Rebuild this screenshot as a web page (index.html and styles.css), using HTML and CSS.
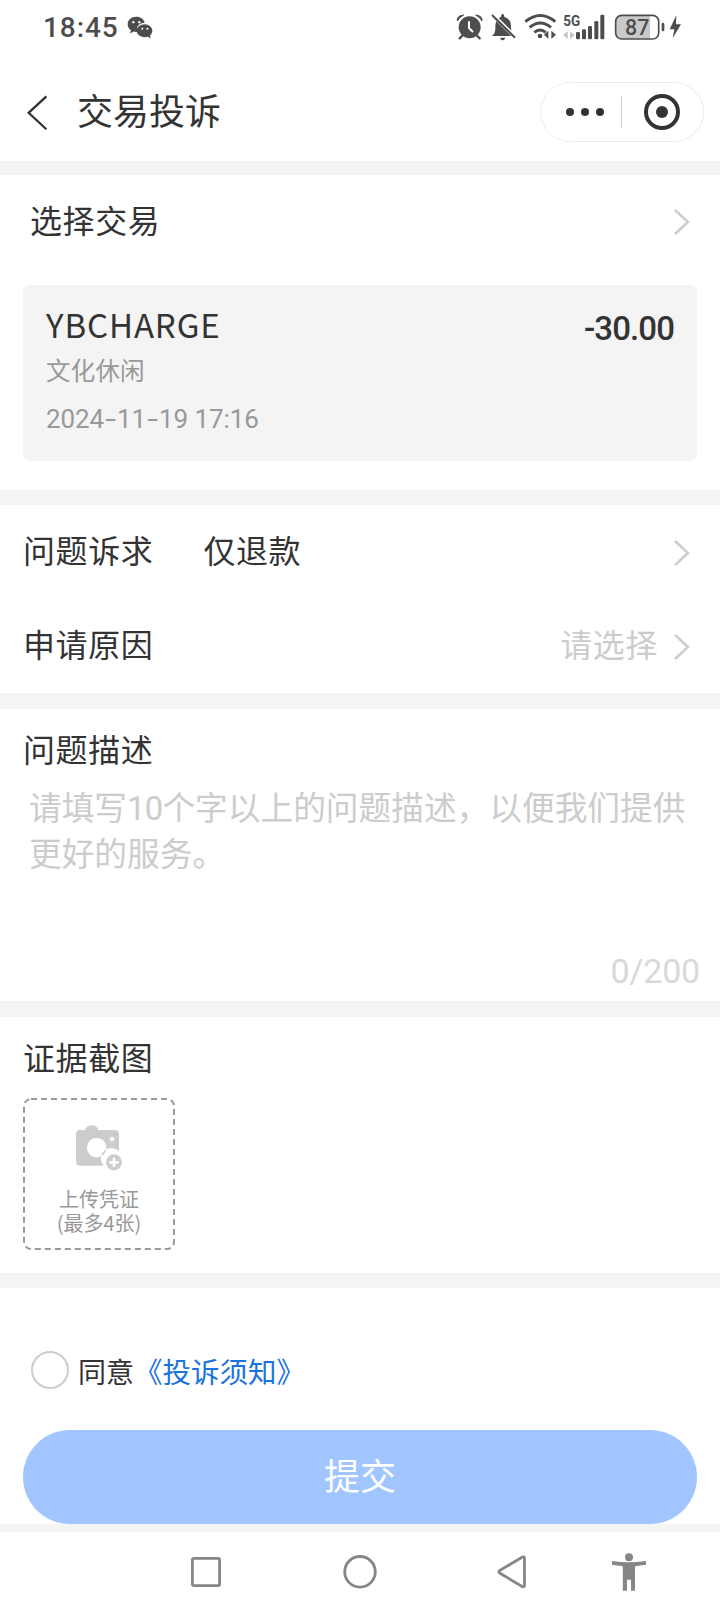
FILE: index.html
```html
<!DOCTYPE html>
<html lang="zh-CN">
<head>
<meta charset="utf-8">
<title>交易投诉</title>
<link rel="stylesheet" href="styles.css">
</head>
<body>
<div class="statusbar">
  <span class="clock">18:45</span>
  <svg class="wechat" viewBox="378 40 84 80" width="28" height="27">
    <path fill="#4d4d4d" d="M409 48c-15 0-26 10-26 22 0 8 4 14 10 18l-3 10 11-6q6 2 11 1c-5-16 7-27 22-27-2-11-13-18-25-18z"/>
    <path fill="#4d4d4d" d="M434 70c-14 0-24 9-24 20s10 19 24 19q5 0 9-1l9 5-2-9c5-4 7-9 7-14 0-11-10-20-23-20z"/>
    <g fill="#fff"><circle cx="400" cy="64" r="3.5"/><circle cx="418" cy="64" r="3.5"/><circle cx="427" cy="84" r="3"/><circle cx="442" cy="84" r="3"/></g>
  </svg>
  <svg class="indicators" viewBox="0 0 840 168" width="280" height="56">
    <g fill="#4d4d4d" stroke="none">
      <circle cx="89" cy="82" r="33"/>
      <path d="M52 63q-2-16 19-18-12 6-19 18zM126 63q2-16-19-18 12 6 19 18z" stroke="#4d4d4d" stroke-width="3" stroke-linejoin="round"/>
      <path d="M67 107l-8 8M111 107l8 8" stroke="#4d4d4d" stroke-width="7" stroke-linecap="round"/>
      <path d="M87 64v20l12 12" fill="none" stroke="#fff" stroke-width="6"/>
      <path d="M156 108c9-8 10-14 10-28 0-15 6-25 17-29q0-9 5-9t5 9c14 4 20 14 20 29 0 14 4 20 6 28zM180 113h16q-3 8-8 8t-8-8z"/>
      <path d="M157 43l68 68" stroke="#fff" stroke-width="12"/>
      <path d="M156 45l69 68" stroke="#4d4d4d" stroke-width="6"/>
    </g>
    <g fill="none" stroke="#4d4d4d" stroke-width="9">
      <path d="M256 65q45-37 90 0M269 82q32-26 64 0M283 97q17-14 34 0"/>
    </g>
    <g fill="#4d4d4d"><circle cx="300" cy="108" r="7"/><path d="M325 92v25l-13-13zM334 92v25l14-13z"/></g>
    <path fill="#c4c4c4" d="M383 94v24l-14-13zM390 94v24l14-13z"/>
    <text class="net" x="370" y="79" textLength="51" lengthAdjust="spacingAndGlyphs">5G</text>
    <g fill="#4d4d4d"><rect x="408" y="96" width="12" height="22" rx="4"/><rect x="426" y="88" width="12" height="30" rx="4"/><rect x="444" y="78" width="12" height="40" rx="4"/><rect x="463" y="63" width="12" height="55" rx="4"/><rect x="481" y="44" width="12" height="74" rx="4"/></g>
    <rect x="527" y="46" width="129" height="71" rx="18" fill="#fff"/>
    <path fill="#c9c9c9" d="M545 46h85v71h-85q-18 0-18-18V64q0-18 18-18z"/>
    <rect x="527" y="46" width="129" height="71" rx="18" fill="none" stroke="#4d4d4d" stroke-width="5"/>
    <rect x="665" y="68" width="8" height="26" rx="4" fill="#4d4d4d"/>
    <text class="charge" x="555" y="104" textLength="73" lengthAdjust="spacingAndGlyphs">87</text>
    <path fill="#4d4d4d" d="M709 46l-20 42h14l-5 27 25-42h-15z"/>
  </svg>
</div>

<header class="header">
  <svg class="back" viewBox="78 280 70 112" width="23" height="37"><path d="M140 287L86 337l54 50" fill="none" stroke="#333" stroke-width="7"/></svg>
  <h1 class="title">交易投诉</h1>
  <div class="capsule">
    <svg viewBox="0 0 162 58" width="162" height="58">
      <g fill="#333"><circle cx="29" cy="29" r="4"/><circle cx="44" cy="29" r="4"/><circle cx="59" cy="29" r="4"/><circle cx="121" cy="29" r="6"/></g>
      <path d="M80.5 13.500v32" stroke="#ccc"/>
      <circle cx="121" cy="29" r="16" fill="none" stroke="#333" stroke-width="4"/>
    </svg>
  </div>
</header>

<main class="page">
  <section class="section trade">
    <div class="row trade-head">
      <span class="label">选择交易</span>
      <svg class="arrow" viewBox="0 0 16 28" width="16" height="28"><path d="M1 2l13 12L1 26" fill="none" stroke="#ccc" stroke-width="2.500"/></svg>
    </div>
    <div class="card">
      <div class="card-info">
        <div class="merchant">YBCHARGE</div>
        <div class="category">文化休闲</div>
        <div class="time">2024<i class="dash">-</i>11<i class="dash">-</i>19 17:16</div>
      </div>
      <div class="amount">-30.00</div>
    </div>
  </section>

  <section class="section appeal">
    <div class="row appeal-row">
      <span class="label">问题诉求</span>
      <span class="value">仅退款</span>
      <svg class="arrow" viewBox="0 0 16 28" width="16" height="28"><path d="M1 2l13 12L1 26" fill="none" stroke="#ccc" stroke-width="2.500"/></svg>
    </div>
    <div class="row reason-row">
      <span class="label">申请原因</span>
      <span class="placeholder">请选择</span>
      <svg class="arrow" viewBox="0 0 16 28" width="16" height="28"><path d="M1 2l13 12L1 26" fill="none" stroke="#ccc" stroke-width="2.500"/></svg>
    </div>
  </section>

  <section class="section describe">
    <div class="label">问题描述</div>
    <p class="hint">请填写<span class="ten">10</span>个字以上的问题描述，以便我们提供<br>更好的服务。</p>
    <div class="counter">0/200</div>
  </section>

  <section class="section evidence">
    <div class="label">证据截图</div>
    <div class="upload">
      <svg class="dashes" viewBox="0 0 152 152" width="152" height="152"><rect x="1" y="1" width="150" height="150" rx="7" fill="none" stroke="#999" stroke-width="2" stroke-dasharray="6 4"/></svg>
      <svg class="camera" viewBox="225 372 144 144" width="48" height="48">
        <path fill="#ccc" fill-rule="evenodd" d="M240 390h15q4-14 20-14t20 14h49q13 0 13 13v51a31 31 0 0 0-46 43h-71q-12 0-12-13v-81q0-13 12-13zM290 414a29 29 0 1 0 .1 0zM336 410a7 7 0 1 0 .1 0z"/>
        <circle cx="342" cy="487" r="24" fill="#ccc"/><path d="M342 473v28M328 487h28" stroke="#fff" stroke-width="8"/>
      </svg>
      <div class="upload-text">上传凭证<br>(最多4张)</div>
    </div>
  </section>

  <section class="section confirm">
    <div class="agree">
      <span class="radio"></span>
      <span class="agree-text">同意</span>
      <a class="link">《投诉须知》</a>
    </div>
    <div class="submit">提交</div>
  </section>
</main>

<nav class="navbar">
  <svg class="nav-square" viewBox="0 0 32 80" width="32" height="80"><rect x="2.400" y="26.400" width="27.200" height="27.200" rx="1.500" fill="none" stroke="#868686" stroke-width="2.800"/></svg>
  <svg class="nav-circle" viewBox="0 0 36 80" width="36" height="80"><circle cx="18" cy="39.800" r="15.300" fill="none" stroke="#868686" stroke-width="2.800"/></svg>
  <svg class="nav-back" viewBox="0 0 32 80" width="32" height="80"><path d="M26.500 25L3.600 38.600q-1.400 1.200 0 2.400L26.500 54.700q2 .7 2-1.400V26.400q0-2.100-2-1.400z" fill="none" stroke="#868686" stroke-width="2.800"/></svg>
  <svg class="nav-person" viewBox="0 0 36 80" width="36" height="80"><g fill="#868686"><circle cx="18" cy="25.300" r="4"/><path d="M1 29q17 2.600 34 0v3.800l-11 1.500v24.400h-4v-11h-4v11h-4.200V34.300L1 32.800z"/></g></svg>
</nav>
</body>
</html>
```

FILE: styles.css
```css
* { box-sizing: border-box; }

body {
  margin: 0;
  width: 720px;
  height: 1612px;
  overflow: hidden;
  background: #fff;
  color: #333;
  font-family: "Noto Sans CJK SC", sans-serif;
}

svg { display: block; flex: none; }

.statusbar { display: flex; align-items: flex-start; height: 56px; }
.clock {
  width: 82px;
  margin-left: 43px;
  font: 500 28px/55px Roboto, sans-serif;
  letter-spacing: 0.9px;
  color: #4d4d4d;
}
.wechat { margin: 14px 0 0 1px; }
.indicators { margin-left: auto; }
.net { font: 700 46px Roboto, sans-serif; fill: #4d4d4d; }
.charge { font: 500 66px Roboto, sans-serif; fill: #4d4d4d; }

.header { display: flex; align-items: center; height: 105px; padding: 0 16px 0 26px; }
.back { margin-top: 7px; }
.title { margin: 0 0 0 28px; font-size: 36px; font-weight: 400; line-height: 102px; }
.capsule {
  width: 164px;
  height: 60px;
  margin-left: auto;
  margin-top: 7px;
  border: 1px solid #ebebeb;
  border-radius: 30px;
}

.page { display: flex; flex-direction: column; height: 1371px; background: #f4f4f4; padding-top: 14px; }
.section { background: #fff; padding: 0 23px; }
.label, .value, .placeholder { font-size: 32px; line-height: 48px; letter-spacing: 0.6px; }
.row { display: flex; align-items: center; }
.arrow { margin-left: auto; }

.trade { height: 315px; margin-bottom: 15px; }
.trade-head { height: 110px; padding: 0 7px; }
.trade-head .label { margin-top: -22px; }
.trade-head .arrow { margin-top: -16px; }
.card {
  display: flex;
  justify-content: space-between;
  height: 176px;
  padding: 15px 24px 0 23px;
  border-radius: 8px;
  background: #f4f4f4;
}
.merchant { font: 400 33px/48px "Noto Sans CJK SC", sans-serif; letter-spacing: 0.9px; }
.category { margin-top: 4px; font-size: 24.500px; line-height: 36px; letter-spacing: 0.2px; color: #999; }
.time { margin-top: 13px; font: 400 26px/36px Roboto, sans-serif; letter-spacing: -0.1px; color: #999; }
.dash { display: inline-block; width: 13px; text-align: center; font-style: normal; transform: scaleX(1.5); }
.amount { margin-right: -1px; font: 500 33px/58px Roboto, sans-serif; letter-spacing: -0.9px; }

.appeal { height: 188px; margin-bottom: 16px; padding-right: 30px; }
.appeal-row { height: 94px; }
.reason-row { height: 94px; }
.appeal-row .value { margin-left: 50px; }
.appeal-row .label, .appeal-row .value { margin-top: -6px; }
.appeal-row .arrow { margin-top: 2px; }
.reason-row .label, .reason-row .placeholder { margin-top: -6px; }
.placeholder { margin-left: auto; color: #ccc; }
.reason-row .arrow { margin-left: 16px; margin-top: 2px; }

.describe { display: flex; flex-direction: column; height: 292px; margin-bottom: 16px; padding-top: 15px; padding-bottom: 6px; }
.hint { margin: 11px 0 0 6px; font-size: 32.700px; line-height: 46px; color: #ccc; white-space: nowrap; }
.ten { font-family: Roboto, sans-serif; line-height: 0; letter-spacing: -0.7px; }
.counter { margin: auto -3px 0 0; font: 400 34px/48px Roboto, sans-serif; letter-spacing: -0.2px; text-align: right; color: #d9d9d9; }

.evidence { height: 256px; margin-bottom: 15px; padding-top: 15px; }
.upload { position: relative; width: 152px; height: 152px; margin-top: 18px; padding-top: 26px; }
.dashes { position: absolute; inset: 0; }
.camera { margin: 0 auto 0 52px; }
.upload-text { margin-top: 15px; font-size: 20px; line-height: 24px; text-align: center; color: #999; }

.confirm { height: 236px; padding-top: 60px; }
.agree { display: flex; align-items: center; height: 44px; padding-left: 8px; font-size: 28px; line-height: 44px; }
.radio { width: 38px; height: 38px; border: 2px solid #ccc; border-radius: 50%; }
.agree-text { margin: 2px 0 0 9px; }
.link { margin-top: 2px; color: #1b74dd; font-size: 28.500px; }
.submit {
  height: 94px;
  margin-top: 38px;
  border-radius: 47px;
  background: #a1c6ff;
  color: #fff;
  font-size: 36px;
  line-height: 88px;
  text-align: center;
}

.navbar { display: flex; height: 80px; padding-left: 190px; background: #fff; }
.nav-circle { margin-left: 120px; }
.nav-back { margin-left: 118px; }
.nav-person { margin-left: 83px; }
```
